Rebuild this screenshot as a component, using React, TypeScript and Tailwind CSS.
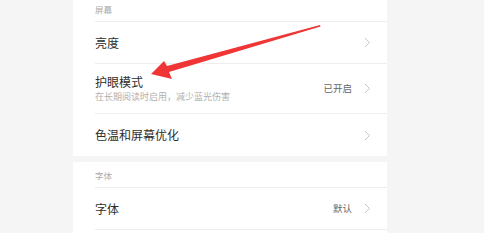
import React from "react";

const font = { fontFamily: '"Noto Sans CJK SC", "Noto Sans", sans-serif' };

function Chevron() {
  return (
    <svg width="7" height="11" viewBox="0 0 7 11" className="ml-3 shrink-0">
      <path d="M1 1 L5.5 5.5 L1 10" fill="none" stroke="#c4c4c4" strokeWidth="1" />
    </svg>
  );
}

function Row({ title, sub, value, last }: { title: string; sub?: string; value?: string; last?: boolean }) {
  return (
    <div className={`ml-[22px] flex items-center pr-[16px] ${sub ? "h-[50px]" : "h-[42px]"} ${last ? "" : "border-b border-[#eeeeee]"}`}>
      <div className="flex-1">
        <div className="text-[12px] leading-[16px] text-[#2e2e2e]">{title}</div>
        {sub && <div className="mt-[1px] text-[9px] leading-[12px] text-[#b0b0b0]">{sub}</div>}
      </div>
      {value && <span className="text-[9.5px] text-[#666666]">{value}</span>}
      <Chevron />
    </div>
  );
}

function Header({ label }: { label: string }) {
  return (
    <div className="ml-[22px] flex h-[26px] items-end border-b border-[#eeeeee] pb-[7px] text-[8.5px] leading-[10px] text-[#aaaaaa]">
      {label}
    </div>
  );
}

export default function App() {
  return (
    <div className="relative h-[233px] w-[484px] overflow-hidden bg-[#f5f5f5]" style={font}>
      <div className="ml-[73px] w-[314px]">
        <div className="-mt-[4px] bg-white">
          <Header label="屏幕" />
          <Row title="亮度" />
          <Row title="护眼模式" sub="在长期阅读时启用，减少蓝光伤害" value="已开启" />
          <Row title="色温和屏幕优化" last />
        </div>
        <div className="mt-[6px] bg-white">
          <Header label="字体" />
          <Row title="字体" value="默认" />
          <Row title="" />
        </div>
      </div>
      <svg className="absolute left-0 top-0" width="484" height="233" viewBox="0 0 484 233">
        <polygon
          points="151,74 164,61 167,66 320,25 320.5,26.5 169,72 172,79"
          fill="#ef3535"
        />
      </svg>
    </div>
  );
}
